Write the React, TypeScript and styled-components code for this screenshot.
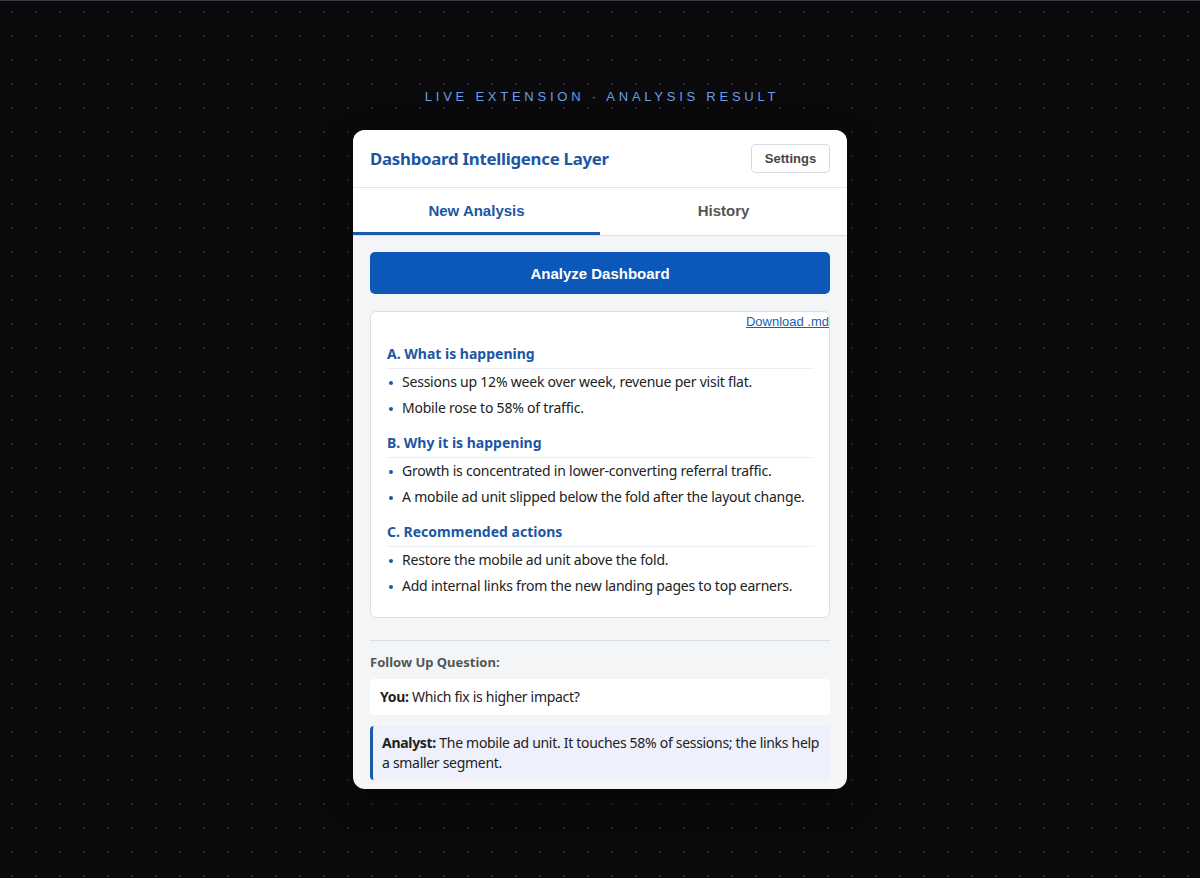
import React from "react";
import styled, { createGlobalStyle } from "styled-components";

const GlobalStyle = createGlobalStyle`
  html, body {
    margin: 0;
    padding: 0;
  }
  body {
    min-height: 878px;
    background-color: #0a0a0c;
    background-image: radial-gradient(circle, #26262b 1px, transparent 1.4px);
    background-size: 24px 24px;
    border-top: 1px solid #3a3a3e;
    box-sizing: border-box;
  }
`;

const Page = styled.main`
  display: flex;
  flex-direction: column;
  align-items: center;
  padding-top: 88px;
`;

const Eyebrow = styled.div`
  font-family: "Liberation Sans", Arial, sans-serif;
  font-size: 13px;
  line-height: 16px;
  letter-spacing: 3.75px;
  color: #6a9de6;
  margin-bottom: 25px;
  padding-left: 4px;
`;

const Panel = styled.section`
  width: 494px;
  background: #f4f5f7;
  border-radius: 12px;
  overflow: hidden;
  box-shadow: 0 10px 30px rgba(0, 0, 0, 0.5);
`;

const Header = styled.header`
  height: 58px;
  box-sizing: border-box;
  display: flex;
  align-items: center;
  justify-content: space-between;
  padding: 0 17px;
  background: #fff;
  border-bottom: 1px solid #e3e5e8;
`;

const Title = styled.h1`
  margin: 0;
  font-family: "Noto Sans", "Open Sans", sans-serif;
  font-size: 16.8px;
  font-weight: 700;
  color: #1c56a3;
  letter-spacing: -0.25px;
`;

const GhostButton = styled.button`
  width: 79px;
  height: 29px;
  background: #fff;
  border: 1px solid #d9dbdf;
  border-radius: 4px;
  font-family: "Liberation Sans", Arial, sans-serif;
  font-size: 13px;
  font-weight: 700;
  color: #454545;
  cursor: pointer;
`;

const Tabs = styled.nav`
  display: flex;
  background: #fff;
  border-bottom: 1px solid #dde1e6;
`;

const Tab = styled.button<{ $active?: boolean }>`
  flex: 1;
  height: 47px;
  padding: 0;
  background: none;
  border: none;
  border-bottom: 3px solid ${(p) => (p.$active ? "#1a5aad" : "transparent")};
  font-family: "Liberation Sans", Arial, sans-serif;
  font-size: 15px;
  font-weight: 700;
  color: ${(p) => (p.$active ? "#1a56a6" : "#555")};
  cursor: pointer;
`;

const Body = styled.div`
  padding: 16px 17px 9px;
`;

const PrimaryButton = styled.button`
  display: block;
  width: 100%;
  height: 42px;
  border: none;
  border-radius: 5px;
  background: #0b58b8;
  color: #fff;
  font-family: "Liberation Sans", Arial, sans-serif;
  font-size: 15px;
  font-weight: 700;
  cursor: pointer;
`;

const ResultCard = styled.article`
  margin-top: 17px;
  background: #fff;
  border: 1px solid #dcdfe3;
  border-radius: 6px;
  padding: 2px 0 18px;
`;

const LinkRow = styled.div`
  display: flex;
  justify-content: flex-end;
`;

const DownloadLink = styled.a`
  font-family: "Liberation Sans", Arial, sans-serif;
  font-size: 13px;
  line-height: 16px;
  color: #1a5fb4;
  text-decoration: underline;
  cursor: pointer;
`;

const Content = styled.div`
  padding: 0 15px 0 16px;
  font-family: "Noto Sans", "Open Sans", sans-serif;
`;

const Section = styled.div`
  margin-top: 12px;
  &:first-child {
    margin-top: 14px;
  }
`;

const SectionTitle = styled.h2`
  margin: 0;
  font-size: 14px;
  line-height: 20px;
  font-weight: 700;
  color: #1c56a3;
  padding-bottom: 4px;
  border-bottom: 1px solid #eceef0;
`;

const Bullets = styled.ul`
  list-style: none;
  margin: 0;
  padding: 0;
`;

const Bullet = styled.li`
  position: relative;
  padding-left: 15px;
  font-size: 14px;
  line-height: 26px;
  color: #222;
  letter-spacing: -0.22px;

  &::before {
    content: "";
    position: absolute;
    left: 2px;
    top: 12px;
    width: 4px;
    height: 4px;
    border-radius: 50%;
    background: #1c56a3;
  }
`;

const Divider = styled.hr`
  margin: 22px 0 0;
  border: none;
  border-top: 1px solid #dcdfe3;
`;

const FollowLabel = styled.div`
  margin-top: 11px;
  font-family: "Noto Sans", "Open Sans", sans-serif;
  font-size: 13px;
  line-height: 20px;
  font-weight: 700;
  color: #555;
`;

const Message = styled.div<{ $analyst?: boolean }>`
  margin-top: ${(p) => (p.$analyst ? "11px" : "7px")};
  padding: ${(p) => (p.$analyst ? "7px 4px 7px 9px" : "8px 10px")};
  border-radius: 4px;
  background: ${(p) => (p.$analyst ? "#eef0fb" : "#fff")};
  border-left: ${(p) => (p.$analyst ? "3px solid #1a5aad" : "none")};
  font-family: "Noto Sans", "Open Sans", sans-serif;
  font-size: 14px;
  line-height: 20px;
  color: #222;
  letter-spacing: -0.3px;
`;

const sections = [
  {
    title: "A. What is happening",
    items: [
      "Sessions up 12% week over week, revenue per visit flat.",
      "Mobile rose to 58% of traffic.",
    ],
  },
  {
    title: "B. Why it is happening",
    items: [
      "Growth is concentrated in lower-converting referral traffic.",
      "A mobile ad unit slipped below the fold after the layout change.",
    ],
  },
  {
    title: "C. Recommended actions",
    items: [
      "Restore the mobile ad unit above the fold.",
      "Add internal links from the new landing pages to top earners.",
    ],
  },
];

export default function App() {
  return (
    <>
      <GlobalStyle />
      <Page>
        <Eyebrow>LIVE EXTENSION · ANALYSIS RESULT</Eyebrow>
        <Panel>
          <Header>
            <Title>Dashboard Intelligence Layer</Title>
            <GhostButton>Settings</GhostButton>
          </Header>
          <Tabs>
            <Tab $active>New Analysis</Tab>
            <Tab>History</Tab>
          </Tabs>
          <Body>
            <PrimaryButton>Analyze Dashboard</PrimaryButton>
            <ResultCard>
              <LinkRow>
                <DownloadLink>Download .md</DownloadLink>
              </LinkRow>
              <Content>
                {sections.map((s) => (
                  <Section key={s.title}>
                    <SectionTitle>{s.title}</SectionTitle>
                    <Bullets>
                      {s.items.map((item) => (
                        <Bullet key={item}>{item}</Bullet>
                      ))}
                    </Bullets>
                  </Section>
                ))}
              </Content>
            </ResultCard>
            <Divider />
            <FollowLabel>Follow Up Question:</FollowLabel>
            <Message>
              <strong>You:</strong> Which fix is higher impact?
            </Message>
            <Message $analyst>
              <strong>Analyst:</strong> The mobile ad unit. It touches 58% of sessions; the links help a smaller
              segment.
            </Message>
          </Body>
        </Panel>
      </Page>
    </>
  );
}
